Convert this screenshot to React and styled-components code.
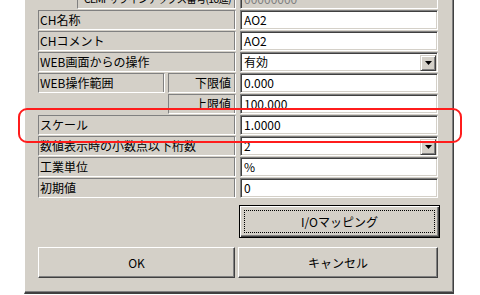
import React from "react";
import styled, { createGlobalStyle } from "styled-components";

const Global = createGlobalStyle`
  html, body { margin: 0; padding: 0; background: #ffffff; }
  body { font-family: "Noto Sans CJK JP", "Liberation Sans", sans-serif; font-size: 12px; }
`;

const Page = styled.div`
  position: relative;
  width: 480px;
  height: 295px;
  overflow: hidden;
  background: #ffffff;
`;

const Panel = styled.div`
  box-sizing: border-box;
  margin: -11px 0 0 24px;
  width: 430px;
  padding: 0 15px 14px 13px;
  background: #d4d0c8;
  border-left: 1px solid #ffffff;
  border-right: 1px solid #404040;
  border-bottom: 2px solid #404040;
  box-shadow: inset -1px -1px 0 #808080;
  display: flex;
  flex-direction: column;
`;

const Form = styled.div`
  display: flex;
  flex-direction: column;
  gap: 1px;
`;

const Row = styled.div`
  display: flex;
  gap: 4px;
  height: 20px;
`;

const LabelGroup = styled.div`
  width: 198px;
  display: flex;
  gap: 3px;
`;

const Label = styled.div`
  box-sizing: border-box;
  flex: ${(p) => (p.$w ? `0 0 ${p.$w}px` : "1 1 auto")};
  min-width: 0;
  height: 20px;
  border-style: solid;
  border-width: ${(p) => (p.$blank ? "0" : "1px")};
  border-color: #808080 #ffffff #ffffff #808080;
  box-shadow: ${(p) => (p.$blank ? "none" : "inset -1px 0 0 #808080")};
  padding: 0 ${(p) => (p.$right ? "4px" : "0")} 0 ${(p) => p.$indent || 1}px;
  font-size: ${(p) => (p.$small ? "10.5px" : "12px")};
  letter-spacing: ${(p) => (p.$small ? "-0.8px" : "normal")};
  line-height: 18px;
  color: #000;
  white-space: nowrap;
  overflow: hidden;
  text-align: ${(p) => (p.$right ? "right" : "left")};
`;

const Field = styled.div`
  position: relative;
  box-sizing: border-box;
  width: 198px;
  height: 20px;
  border: 1px solid;
  border-color: #808080 #ffffff #ffffff #808080;
  box-shadow: inset 1px 1px 0 #404040, inset -1px -1px 0 #d4d0c8;
  background: ${(p) => (p.$disabled ? "#d4d0c8" : "#ffffff")};
  color: ${(p) => (p.$disabled ? "#808080" : "#000000")};
  padding: 0 0 0 3px;
  line-height: 18px;
  white-space: nowrap;
  overflow: hidden;
  display: flex;
  align-items: center;
  justify-content: space-between;
`;

const DropButton = styled.div`
  box-sizing: border-box;
  width: 16px;
  height: 16px;
  margin-right: 1px;
  margin-top: 1px;
  background: #d4d0c8;
  border: 1px solid;
  border-color: #d4d0c8 #404040 #404040 #d4d0c8;
  box-shadow: inset 1px 1px 0 #ffffff, inset -1px -1px 0 #808080;
  display: flex;
  align-items: center;
  justify-content: center;
`;

const Arrow = () => (
  <svg width="7" height="4" viewBox="0 0 7 4">
    <path d="M0 0h7L3.5 4z" fill="#000" />
  </svg>
);

const MapRow = styled.div`
  display: flex;
  justify-content: flex-end;
  margin-top: 7px;
`;

const MapButton = styled.div`
  box-sizing: border-box;
  width: 201px;
  height: 33px;
  margin-right: -2px;
  border: 1px solid #000000;
  background: #d4d0c8;
  box-shadow: inset 1px 1px 0 #ffffff, inset -1px -1px 0 #404040, inset -2px -2px 0 #808080;
  padding: 4px;
  display: flex;
`;

const Focus = styled.div`
  flex: 1;
  border: 1px dotted #000;
  display: flex;
  align-items: center;
  justify-content: center;
  line-height: 16px;
`;

const ButtonRow = styled.div`
  display: flex;
  gap: 3px;
  margin-top: 9px;
`;

const PushButton = styled.div`
  box-sizing: border-box;
  width: ${(p) => p.$w}px;
  height: 31px;
  background: #d4d0c8;
  border: 1px solid;
  border-color: #ffffff #404040 #404040 #ffffff;
  box-shadow: inset -1px -1px 0 #808080;
  display: flex;
  align-items: center;
  justify-content: center;
  line-height: 16px;
`;

const Highlight = styled.div`
  position: absolute;
  left: 18px;
  top: 108px;
  width: 444px;
  height: 35px;
  box-sizing: border-box;
  border: 2px solid #ff1c1c;
  border-radius: 9px;
  pointer-events: none;
`;

const rows = [
  { label: "CH名称", value: "AO2" },
  { label: "CHコメント", value: "AO2" },
  { label: "WEB画面からの操作", value: "有効", drop: true },
  { label: "WEB操作範囲", sub: "下限値", value: "0.000" },
  { blank: true, sub: "上限値", value: "100.000" },
  { label: "スケール", value: "1.0000" },
  { label: "数値表示時の小数点以下桁数", value: "2", drop: true },
  { label: "工業単位", value: "%" },
  { label: "初期値", value: "0" },
];

export default function App() {
  return (
    <>
      <Global />
      <Page>
        <Panel>
          <Form>
            <Row>
              <LabelGroup>
                <Label $w={36} $blank />
                <Label $indent={6} $small>CEMPサブインデックス番号(16進)</Label>
              </LabelGroup>
              <Field $disabled>00000000</Field>
            </Row>
            {rows.map((r, i) => (
              <Row key={i}>
                <LabelGroup>
                  {r.sub ? (
                    <>
                      <Label $w={127} $blank={r.blank}>{r.label}</Label>
                      <Label $right>{r.sub}</Label>
                    </>
                  ) : (
                    <Label>{r.label}</Label>
                  )}
                </LabelGroup>
                <Field>
                  <span>{r.value}</span>
                  {r.drop && (
                    <DropButton>
                      <Arrow />
                    </DropButton>
                  )}
                </Field>
              </Row>
            ))}
          </Form>
          <MapRow>
            <MapButton>
              <Focus>I/Oマッピング</Focus>
            </MapButton>
          </MapRow>
          <ButtonRow>
            <PushButton $w={198}>OK</PushButton>
            <PushButton $w={201}>キャンセル</PushButton>
          </ButtonRow>
        </Panel>
        <Highlight />
      </Page>
    </>
  );
}
